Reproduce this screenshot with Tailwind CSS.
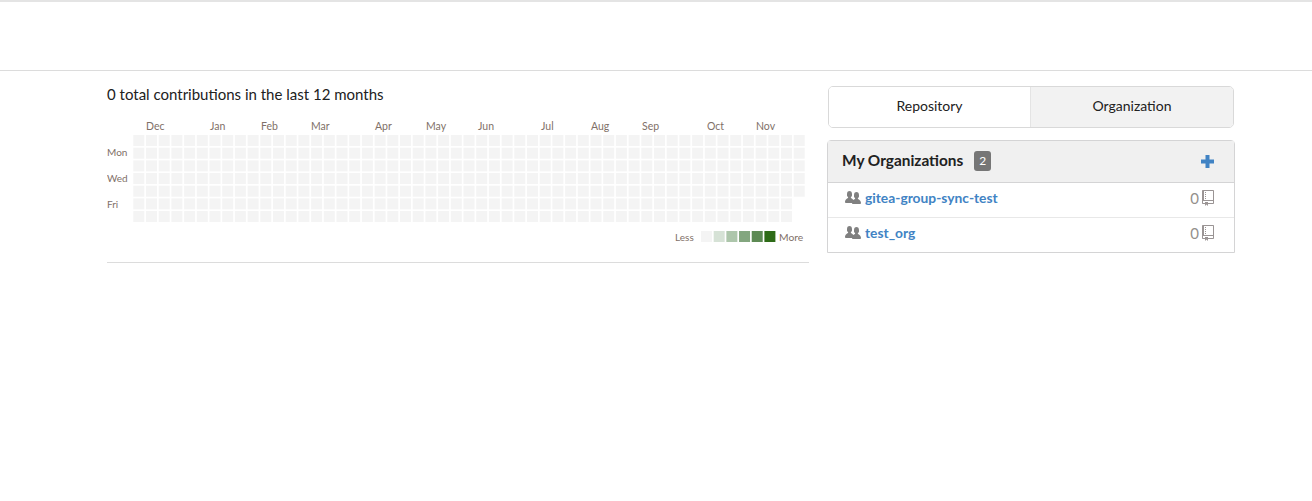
<!DOCTYPE html>
<html>
<head>
<meta charset="utf-8">
<script src="https://cdn.jsdelivr.net/npm/@tailwindcss/browser@4"></script>
</head>
<body class="bg-white font-['Lato','Liberation_Sans',sans-serif] text-[#212121]">
<div class="h-[71px] border-t-2 border-b border-t-[#e4e4e4] border-b-[#dcdcdc]"></div>
<main class="flex items-start ml-[107px] w-[1128px] h-[430px]">
  <section class="w-[702px] mr-[18px] border-b border-[#dcdcdc] h-[192px]">
    <h2 class="text-[15px] leading-[20px] mt-[13px] font-normal">0 total contributions in the last 12 months</h2>
    <svg id="cal" class="block mt-[15px]" width="702" height="124" viewBox="0 0 702 124" font-size="10"></svg>
  </section>
  <aside class="w-[408px] pt-[15px]">
    <div class="flex h-[42px] ml-px w-[406px] border border-[#d9d9d9] rounded-[5px] overflow-hidden text-[14px]">
      <div class="w-[201px] flex items-center justify-center bg-white pb-[3px]">Repository</div>
      <div class="flex-1 flex items-center justify-center bg-[#f2f2f2] border-l border-[#e4e4e4] pb-[3px]">Organization</div>
    </div>
    <div class="mt-[12px] border border-[#d4d4d5] rounded-t-[4px]">
      <div class="flex items-center h-[42px] bg-[#f0f0f0] border-b border-[#d4d4d5] pl-[14px] pr-[20px]">
        <span class="text-[15.4px] font-bold pb-[2px]">My Organizations</span>
        <span class="ml-[11px] w-[17px] h-[20px] rounded-[3px] bg-[#767676] text-white text-[12px] flex items-center justify-center mb-[2px]">2</span>
        <svg class="ml-auto w-[13px] h-[13px] fill-[#4183c4]" viewBox="0 0 13 13"><path d="M4.5 0h4v4.500H13v4H8.500V13h-4V8.500H0v-4h4.500z"/></svg>
      </div>
      <div class="flex items-center h-[35px] border-b border-[#e8e8e8] pl-[17px] pr-[20px] pb-[4px]">
        <svg class="w-[16px] h-[16px] fill-[#808080] shrink-0" viewBox="0 0 16 16"><path d="M16 12.999c0 .439-.45 1-1 1H7.995c-.539 0-.994-.447-.995-.999H1c-.54 0-1-.561-1-1 0-2.634 3-4 3-4s.229-.409 0-1c-.841-.621-1.058-.59-1-3 .058-2.419 1.367-3 2.5-3s2.442.58 2.5 3c.058 2.41-.159 2.379-1 3-.229.59 0 1 0 1s1.549.711 2.42 2.088C9.196 9.369 10 8.999 10 8.999s.229-.409 0-1c-.841-.62-1.058-.59-1-3 .058-2.419 1.367-3 2.500-3s2.437.581 2.495 3c.059 2.41-.158 2.38-1 3-.229.59 0 1 0 1s3.005 1.366 3.005 4z"/></svg>
        <span class="ml-[4px] text-[13.8px] font-bold text-[#4183c4]">gitea-group-sync-test</span>
        <span class="ml-auto text-[15px] text-[#94908c]">0</span>
        <svg class="ml-[3px] mb-[1px] w-[12px] h-[16px] fill-[#9a9494]" viewBox="0 0 12 16"><path d="M4 9H3V8h1v1zm0-3H3v1h1V6zm0-2H3v1h1V4zm0-2H3v1h1V2zm8-1v12c0 .55-.45 1-1 1H6v2l-1.5-1.5L3 16v-2H1c-.55 0-1-.45-1-1V1c0-.55.45-1 1-1h10c.55 0 1 .45 1 1zm-1 10H1v2h2v-1h3v1h5v-2zm0-10H2v9h9V1z"/></svg>
      </div>
      <div class="flex items-center h-[34px] pl-[17px] pr-[20px] pb-[4px]">
        <svg class="w-[16px] h-[16px] fill-[#808080] shrink-0" viewBox="0 0 16 16"><path d="M16 12.999c0 .439-.45 1-1 1H7.995c-.539 0-.994-.447-.995-.999H1c-.54 0-1-.561-1-1 0-2.634 3-4 3-4s.229-.409 0-1c-.841-.621-1.058-.59-1-3 .058-2.419 1.367-3 2.5-3s2.442.58 2.5 3c.058 2.41-.159 2.379-1 3-.229.59 0 1 0 1s1.549.711 2.42 2.088C9.196 9.369 10 8.999 10 8.999s.229-.409 0-1c-.841-.62-1.058-.59-1-3 .058-2.419 1.367-3 2.500-3s2.437.581 2.495 3c.059 2.41-.158 2.38-1 3-.229.59 0 1 0 1s3.005 1.366 3.005 4z"/></svg>
        <span class="ml-[4px] text-[13.8px] font-bold text-[#4183c4]">test_org</span>
        <span class="ml-auto text-[15px] text-[#94908c]">0</span>
        <svg class="ml-[3px] mb-[1px] w-[12px] h-[16px] fill-[#9a9494]" viewBox="0 0 12 16"><path d="M4 9H3V8h1v1zm0-3H3v1h1V6zm0-2H3v1h1V4zm0-2H3v1h1V2zm8-1v12c0 .55-.45 1-1 1H6v2l-1.5-1.5L3 16v-2H1c-.55 0-1-.45-1-1V1c0-.55.45-1 1-1h10c.55 0 1 .45 1 1zm-1 10H1v2h2v-1h3v1h5v-2zm0-10H2v9h9V1z"/></svg>
      </div>
    </div>
  </aside>
</main>
<script>
  var svg = document.getElementById('cal'), out = '';
  var P = 12.7, S = 11, X0 = 26.3, Y0 = 16;
  for (var c = 0; c < 53; c++) for (var r = 0; r < (c === 52 ? 5 : 7); r++)
    out += '<rect x="' + (X0 + c * P) + '" y="' + (Y0 + r * 12.68) + '" width="' + S + '" height="' + S + '" fill="#f4f4f4"/>';
  var months = [['Dec',39],['Jan',103],['Feb',154],['Mar',204],['Apr',268],['May',319],['Jun',371],['Jul',434],['Aug',484],['Sep',535],['Oct',600],['Nov',649]];
  months.forEach(function (m) { out += '<text x="' + m[1] + '" y="11" font-size="10.5" fill="#7f7068">' + m[0] + '</text>'; });
  [['Mon',37],['Wed',63],['Fri',89]].forEach(function (d) { out += '<text x="0" y="' + d[1] + '" font-size="10" fill="#7f7068">' + d[0] + '</text>'; });
  out += '<text x="568" y="122" font-size="10" fill="#7f7068">Less</text><text x="672" y="122" font-size="10.3" fill="#7f7068">More</text>';
  ['#f4f4f4','#d6e2d6','#adc6ab','#83a67f','#5d8a54','#2e6b17'].forEach(function (col, i) {
    out += '<rect x="' + (594 + i * 12.68) + '" y="112" width="11" height="11" fill="' + col + '"/>';
  });
  svg.innerHTML = out;
</script>
</body>
</html>
